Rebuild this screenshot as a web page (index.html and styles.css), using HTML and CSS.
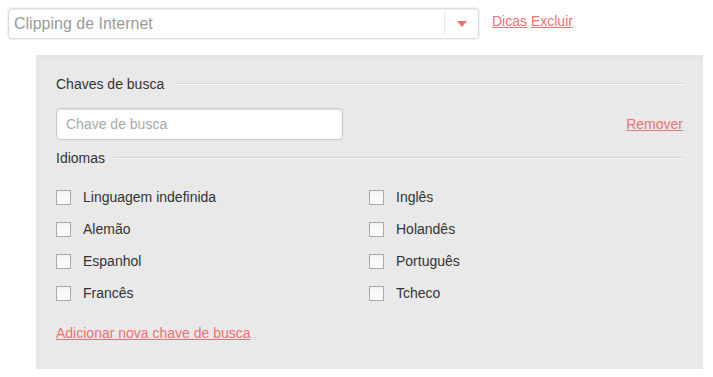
FILE: index.html
```html
<!DOCTYPE html>
<html lang="pt">
<head>
<meta charset="utf-8">
<link rel="stylesheet" href="styles.css">
</head>
<body>
<div class="top">
  <div class="select">
    <span class="select-text">Clipping de Internet</span>
    <span class="select-btn"><span class="arrow"></span></span>
  </div>
  <div class="top-links">
    <a class="link" href="#">Dicas</a> <a class="link" href="#">Excluir</a>
  </div>
</div>
<div class="panel">
  <div class="legend"><span>Chaves de busca</span><span class="rule"></span></div>
  <div class="key-row">
    <div class="input">Chave de busca</div>
    <a class="link" href="#">Remover</a>
  </div>
  <div class="legend legend-lang"><span>Idiomas</span><span class="rule"></span></div>
  <div class="langs">
    <label class="opt"><span class="box"></span>Linguagem indefinida</label>
    <label class="opt"><span class="box"></span>Inglês</label>
    <label class="opt"><span class="box"></span>Alemão</label>
    <label class="opt"><span class="box"></span>Holandês</label>
    <label class="opt"><span class="box"></span>Espanhol</label>
    <label class="opt"><span class="box"></span>Português</label>
    <label class="opt"><span class="box"></span>Francês</label>
    <label class="opt"><span class="box"></span>Tcheco</label>
  </div>
  <a class="link add" href="#">Adicionar nova chave de busca</a>
</div>
</body>
</html>
```
FILE: styles.css
```css
html, body {
  margin: 0;
  padding: 0;
  background: #fff;
  font-family: "Liberation Sans", Arial, sans-serif;
  color: #333;
}
.top {
  display: flex;
  align-items: flex-start;
  padding: 8px 0 0 8px;
  height: 55px;
  box-sizing: border-box;
}
.select {
  width: 471px;
  height: 31px;
  box-sizing: border-box;
  border: 1px solid #dcdcdc;
  border-radius: 4px;
  box-shadow: 0 0 0 1px #f1f1f1, inset 0 1px 2px rgba(0,0,0,0.06);
  display: flex;
  align-items: center;
  background: #fff;
}
.select-text {
  flex: 1;
  padding-left: 5px;
  font-size: 16px;
  color: #9a9a9a;
}
.select-btn {
  width: 33px;
  height: 23px;
  border-left: 1px solid #e6e6e6;
  display: flex;
  align-items: center;
  justify-content: center;
}
.arrow {
  width: 0;
  height: 0;
  border-left: 5px solid transparent;
  border-right: 5px solid transparent;
  border-top: 6px solid #e8736b;
  margin-top: 1px;
}
.top-links {
  margin-left: 13px;
  font-size: 14px;
  line-height: 26px;
}
.link {
  color: #ea7371;
  text-decoration: underline;
  font-size: 14px;
}
.panel {
  margin-left: 36px;
  width: 667px;
  height: 314px;
  box-sizing: border-box;
  background: #e9e9e9;
  box-shadow: inset 0 2px 2px rgba(0,0,0,0.03);
  padding: 20px 20px 0 20px;
}
.legend {
  display: flex;
  align-items: center;
  height: 18px;
  font-size: 14px;
  color: #333;
}
.rule {
  flex: 1;
  margin-left: 11px;
  border-top: 1px solid #d5d5d5;
  border-bottom: 1px solid #f7f7f7;
}
.legend-lang .rule {
  margin-left: 8px;
}
.key-row {
  display: flex;
  align-items: center;
  justify-content: space-between;
  margin-top: 15px;
}
.input {
  width: 287px;
  height: 32px;
  box-sizing: border-box;
  border: 1px solid #c9c9c9;
  border-radius: 4px;
  background: #fff;
  box-shadow: inset 0 1px 3px rgba(0,0,0,0.12);
  font-size: 14px;
  color: #a9a9a9;
  padding-left: 9px;
  line-height: 30px;
}
.legend-lang {
  margin-top: 9px;
}
.langs {
  display: grid;
  grid-template-columns: 313px 1fr;
  grid-auto-rows: 32px;
  margin-top: 14px;
}
.opt {
  display: flex;
  align-items: center;
  font-size: 14px;
  color: #333;
}
.box {
  width: 15px;
  height: 15px;
  box-sizing: border-box;
  border: 1px solid #a8a8a8;
  background: linear-gradient(#f4f4f4, #fff);
  margin-right: 12px;
}
.add {
  display: inline-block;
  margin-top: 15px;
  line-height: 18px;
}
```
